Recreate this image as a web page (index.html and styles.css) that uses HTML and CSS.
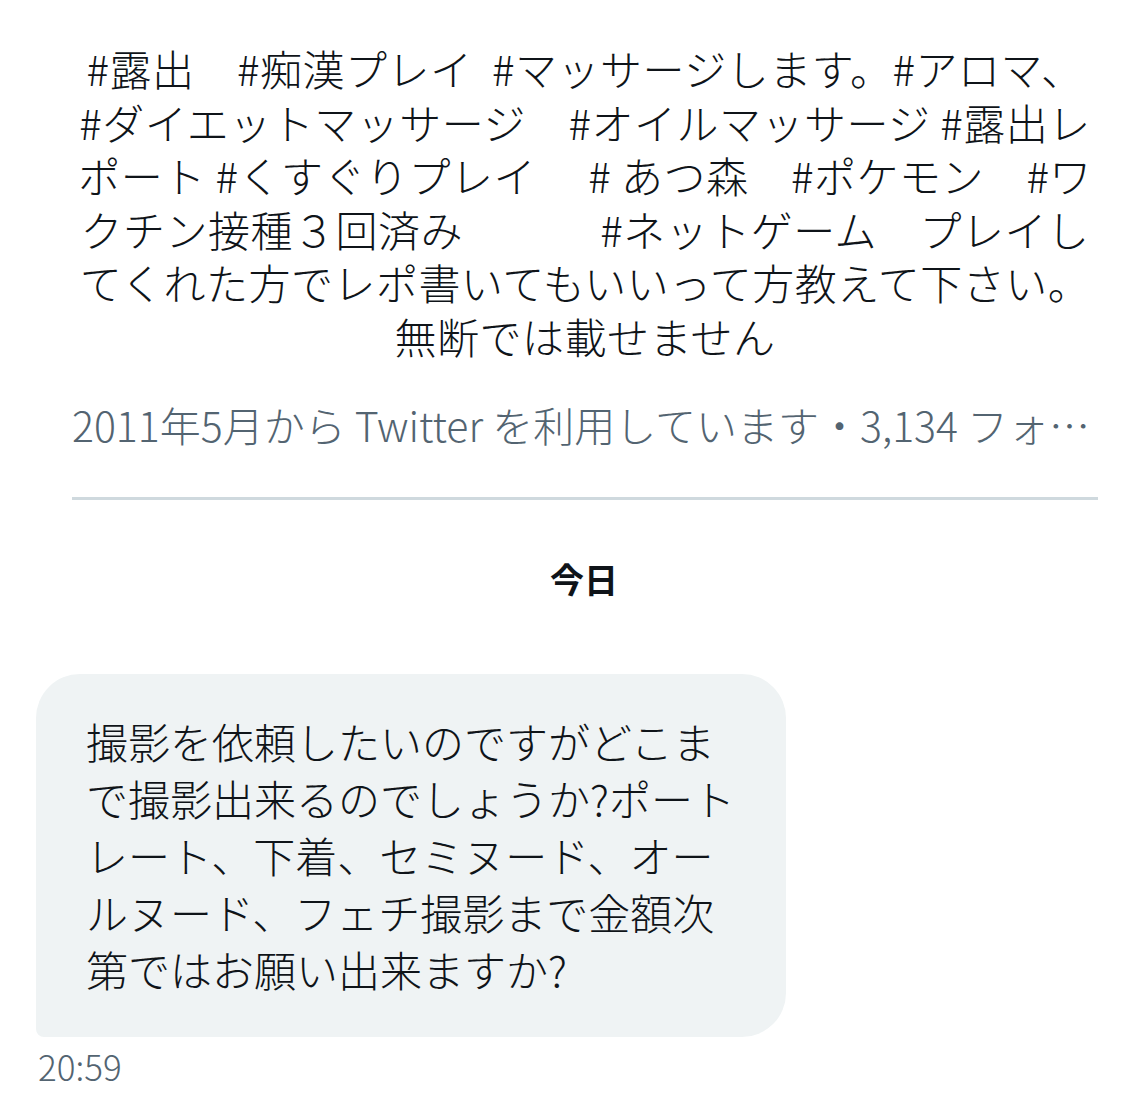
FILE: index.html
```html
<!DOCTYPE html>
<html lang="ja">
<head>
<meta charset="utf-8">
<link rel="stylesheet" href="styles.css">
</head>
<body>
<div class="profile">
  <p class="bio">#露出　#痴漢プレイ &nbsp;#マッサージします。#アロマ、<br>#ダイエットマッサージ　#オイルマッサージ #露出レ<br>ポート #くすぐりプレイ　 # あつ森　#ポケモン　#ワ<br>クチン接種３回済み　　　 #ネットゲーム　プレイし<br>てくれた方でレポ書いてもいいって方教えて下さい。<br>無断では載せません</p>
  <p class="meta">2011年5月から Twitter を利用しています・3,134 フォロワー</p>
  <div class="divider"></div>
</div>
<div class="day">今日</div>
<div class="thread">
  <div class="bubble">撮影を依頼したいのですがどこま<br>で撮影出来るのでしょうか?ポート<br>レート、下着、セミヌード、オー<br>ルヌード、フェチ撮影まで金額次<br>第ではお願い出来ますか?</div>
  <div class="time">20:59</div>
</div>
</body>
</html>
```
FILE: styles.css
```css
html, body {
  margin: 0;
  padding: 0;
  background: #ffffff;
}
body {
  font-family: "Noto Sans CJK JP", "Noto Sans", sans-serif;
  font-weight: 300;
  color: #0f1419;
}
.profile {
  padding: 41px 40px 0 72px;
}
.bio {
  margin: 0;
  text-align: center;
  font-size: 42px;
  letter-spacing: 0.5px;
  line-height: 53.5px;
}
.meta {
  margin: 37px 0 0 0;
  font-size: 41px;
  line-height: 50px;
  color: #536471;
  white-space: nowrap;
  overflow: hidden;
  text-overflow: ellipsis;
}
.divider {
  margin-top: 48px;
  height: 3px;
  background: #cfd9de;
}
.day {
  margin-top: 59px;
  text-align: center;
  padding-left: 30px;
  font-size: 34px;
  line-height: 40px;
  font-weight: 700;
}
.thread {
  margin-top: 75px;
  padding-left: 36px;
}
.bubble {
  width: 700px;
  padding: 38px 0 40px 50px;
  background: #eff3f4;
  border-radius: 44px 44px 44px 8px;
  font-size: 42px;
  line-height: 57px;
  white-space: nowrap;
}
.time {
  margin-top: 9px;
  margin-left: 2px;
  font-size: 35px;
  line-height: 40px;
  color: #536471;
}
```
